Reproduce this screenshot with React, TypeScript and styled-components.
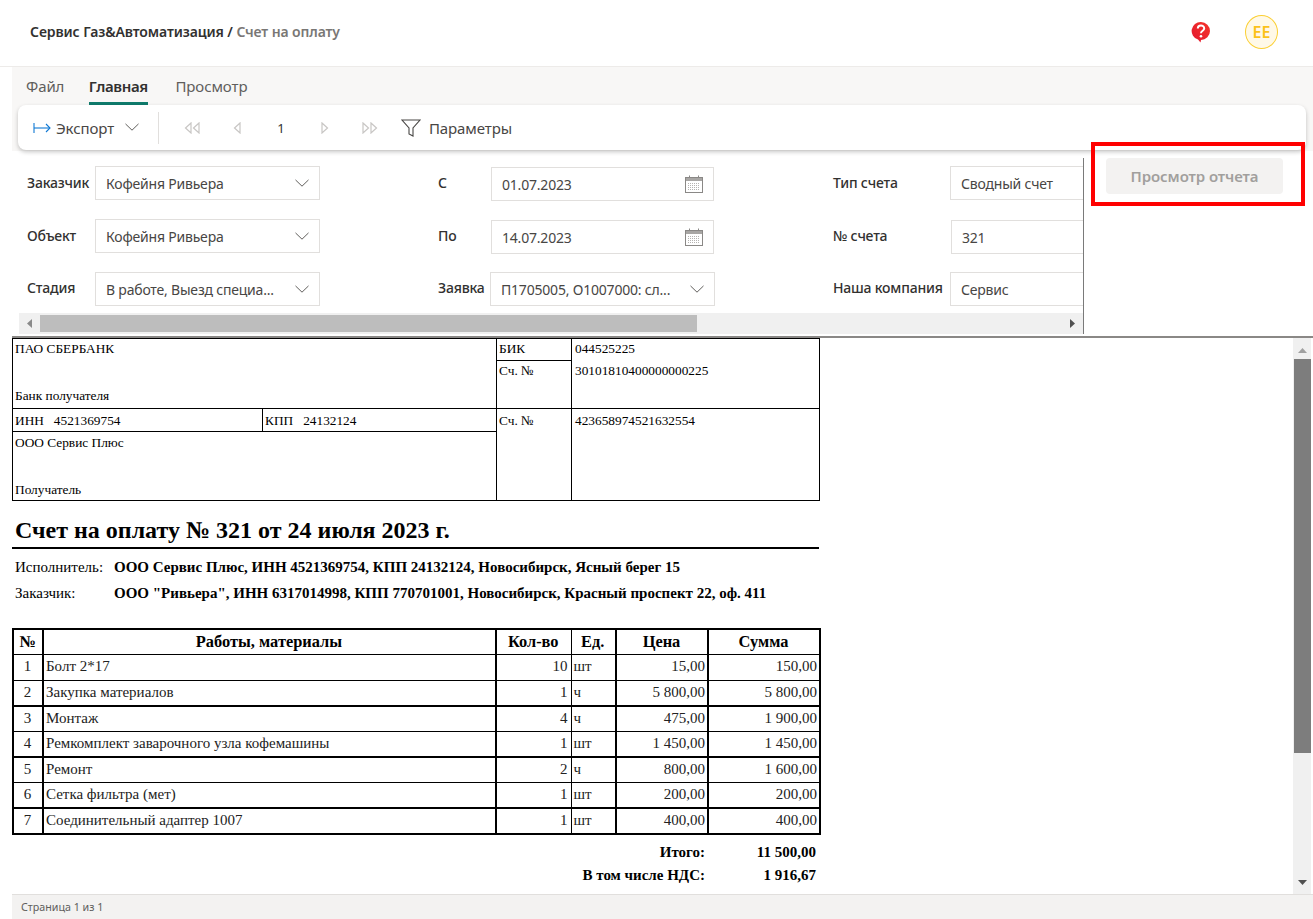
import { createGlobalStyle } from "styled-components";
import styled from "styled-components";

const UI_FONT = `"Noto Sans", "Open Sans", sans-serif`;
const DOC_FONT = `"Liberation Serif", "Times New Roman", serif`;

const GlobalStyle = createGlobalStyle`
  html, body { margin: 0; padding: 0; background: #fff; overflow: hidden; }
  * { box-sizing: border-box; }
`;

const Page = styled.div`
  width: 1313px;
  height: 919px;
  display: flex;
  flex-direction: column;
  font-family: ${UI_FONT};
  color: #323130;
  font-size: 14px;
`;

const Header = styled.header`
  height: 67px;
  flex: none;
  display: flex;
  align-items: center;
  padding: 0 35px 3px 30px;
  border-bottom: 1px solid #edebe9;
`;

const Crumbs = styled.div`
  flex: 1;
  font-size: 14px;
  font-weight: 600;
  letter-spacing: -0.1px;
`;

const CrumbLast = styled.span`
  color: #797775;
`;

const HelpIcon = styled.svg`
  width: 20px;
  height: 22px;
  margin-right: 34px;
`;

const Avatar = styled.div`
  width: 33px;
  height: 34px;
  border-radius: 50%;
  border: 1px solid #fbcf33;
  background: #fff9e8;
  color: #fbc21a;
  font-size: 16px;
  font-weight: 600;
  display: flex;
  align-items: center;
  justify-content: center;
`;

const Body = styled.div`
  flex: 1;
  min-height: 0;
  display: flex;
  flex-direction: column;
  padding-left: 12px;
`;

const Ribbon = styled.div`
  height: 84px;
  flex: none;
  background: #f8f7f6;
  padding: 0 7px 0 6px;
`;

const Tabs = styled.div`
  height: 38px;
  display: flex;
  gap: 26.5px;
  padding-left: 8px;
`;

const Tab = styled.div<{ $active?: boolean }>`
  height: 38px;
  padding-top: 9px;
  margin: ${(p) => (p.$active ? "0 1px 0 -2px" : "0")};
  font-size: 15px;
  line-height: 20px;
  letter-spacing: ${(p) => (p.$active ? "-0.35px" : "-0.1px")};
  color: ${(p) => (p.$active ? "#323130" : "#605e5c")};
  font-weight: ${(p) => (p.$active ? 600 : 400)};
  border-bottom: ${(p) => (p.$active ? "3px solid #0f7b6c" : "3px solid transparent")};
`;

const Toolbar = styled.div`
  height: 45px;
  background: #fff;
  border-radius: 8px;
  box-shadow: 0 2px 4px rgba(0, 0, 0, 0.22);
  display: flex;
  align-items: center;
  padding-left: 15px;
  position: relative;
`;

const ToolText = styled.span`
  font-size: 15px;
  color: #484644;
  letter-spacing: -0.1px;
`;

const ExportGroup = styled.div`
  width: 125px;
  display: flex;
  align-items: center;
  gap: 5px;
`;

const ExportChevron = styled.span`
  display: flex;
  margin-left: 6px;
`;

const ToolDivider = styled.div`
  width: 1px;
  height: 32px;
  background: #e1dfdd;
  margin-right: 11px;
`;

const NavItem = styled.div`
  width: 44.4px;
  height: 24px;
  display: flex;
  align-items: center;
  justify-content: center;
  font-size: 13px;
`;

const FilterGroup = styled.div`
  margin-left: 9px;
  display: flex;
  align-items: center;
  gap: 8px;
`;

const ParamArea = styled.div`
  height: 185px;
  flex: none;
  display: flex;
  position: relative;
`;

const ParamPane = styled.div`
  width: 1072px;
  margin-top: 7px;
  border-right: 1px solid #7a7a7a;
  height: 176px;
  display: flex;
  flex-direction: column;
  overflow: hidden;
`;

const ParamGrid = styled.div`
  flex: 1;
  min-height: 0;
  overflow: hidden;
  padding: 8px 0 0 15px;
  display: grid;
  grid-template-columns: 411px 395px 300px;
  grid-auto-rows: 53px;
`;

const Field = styled.div`
  display: flex;
  align-items: flex-start;
`;

const Label = styled.div<{ $w: number; $up?: boolean }>`
  width: ${(p) => p.$w}px;
  flex: none;
  font-size: 14px;
  font-weight: 500;
  line-height: 34px;
  letter-spacing: -0.2px;
  color: #323130;
  margin-top: ${(p) => (p.$up ? "-1px" : "0")};
`;

const InputBox = styled.div<{ $w: number; $low?: boolean }>`
  width: ${(p) => p.$w}px;
  height: 34px;
  flex: none;
  margin-top: ${(p) => (p.$low ? "1px" : "0")};
  border: 1px solid #e1dfdd;
  display: flex;
  align-items: center;
  justify-content: space-between;
  padding: 0 10px 0 10px;
  font-size: 14px;
  letter-spacing: -0.2px;
  color: #484644;
  white-space: nowrap;
`;

const HScroll = styled.div`
  height: 21px;
  flex: none;
  margin-left: 7px;
  padding: 0 4px;
  background: #f0f0f0;
  display: flex;
  align-items: center;
`;

const HThumb = styled.div`
  width: 657px;
  height: 17px;
  background: #bdbdbd;
  margin-left: 4px;
`;

const ScrollArrow = styled.svg`
  width: 13px;
  height: 13px;
  flex: none;
`;

const ScrollSpacer = styled.div`
  flex: 1;
`;

const RunPane = styled.div`
  padding: 7px 0 0 22px;
`;

const RunButton = styled.div`
  width: 177px;
  height: 36px;
  border-radius: 4px;
  background: #f3f2f1;
  color: #a19f9d;
  font-weight: 600;
  font-size: 15px;
  letter-spacing: -0.1px;
  display: flex;
  align-items: center;
  justify-content: center;
`;

/* annotation frame drawn over the screenshot */
const RedFrame = styled.div`
  position: absolute;
  left: 1079px;
  top: -9px;
  width: 214px;
  height: 64px;
  border: 4px solid #ff0000;
  pointer-events: none;
`;

const ReportArea = styled.div`
  flex: 1;
  min-height: 0;
  display: flex;
  border-top: 2px solid #8a8886;
`;

const ReportPage = styled.div`
  flex: 1;
  font-family: ${DOC_FONT};
  color: #000;
  overflow: hidden;
`;

const VScroll = styled.div`
  width: 18px;
  margin-right: 2px;
  flex: none;
  background: #f0f0f0;
  display: flex;
  flex-direction: column;
  align-items: center;
`;

const VThumb = styled.div`
  width: 17px;
  height: 394px;
  background: #7d7d7d;
  margin-top: 2px;
`;

const UpArrow = styled(ScrollArrow)`
  margin-top: 6px;
`;

const DownArrow = styled(ScrollArrow)`
  margin-bottom: 5px;
`;

const BankTable = styled.table`
  width: 807px;
  height: 162px;
  table-layout: fixed;
  border-collapse: collapse;
  font-size: 13.33px;
  td {
    border: 1px solid #000;
    padding: 1px 2px;
    vertical-align: top;
    line-height: 17px;
  }
`;

const BankRow = styled.tr<{ $h: number; $top?: number }>`
  height: ${(p) => p.$h}px;
  td {
    padding-top: ${(p) => p.$top ?? 1}px;
  }
`;

const AccountCell = styled.td`
  && {
    padding-left: 3px;
  }
`;

const BankStack = styled.div`
  height: 64px;
  display: flex;
  flex-direction: column;
  justify-content: space-between;
`;

const SecondAccount = styled.div`
  margin-top: 5px;
`;

const DocTitle = styled.h1`
  width: 807px;
  height: 48px;
  margin: 0;
  padding: 15px 0 0 3px;
  font-size: 24px;
  line-height: 28px;
  font-weight: 700;
  border-bottom: 2px solid #000;
`;

const PartyList = styled.div`
  padding: 9px 0 0 3px;
  display: flex;
  flex-direction: column;
  gap: 8px;
  height: 79px;
`;

const PartyRow = styled.div`
  display: flex;
  line-height: 18px;
`;

const PartyLabel = styled.div`
  width: 99px;
  flex: none;
  font-size: 15px;
`;

const PartyValue = styled.div`
  font-weight: 700;
  font-size: 15px;
  white-space: nowrap;
`;

const ItemsTable = styled.table`
  width: 807px;
  table-layout: fixed;
  border-collapse: collapse;
  font-size: 15px;
  th, td {
    border: 1px solid #000;
    padding: 0 3px 1px 2px;
    height: 25.6px;
  }
  td:nth-child(5),
  td:nth-child(6) {
    padding-right: 2px;
  }
  tr > *:nth-child(1),
  tr > *:nth-child(2),
  tr > *:nth-child(4),
  tr > *:nth-child(5),
  tr > *:nth-child(6) {
    border-right-width: 2px;
  }
  tr > *:first-child {
    border-left-width: 2px;
  }
  th {
    font-size: 16.4px;
    font-weight: 700;
    border-top-width: 2px;
  }
`;

const ItemRow = styled.tr<{ $thick?: boolean }>`
  td {
    border-bottom-width: ${(p) => (p.$thick ? "2px" : "1px")};
    color: #222;
  }
`;

const NumCell = styled.td`
  text-align: right;
`;

const CenterCell = styled.td`
  text-align: center;
`;

const Totals = styled.div`
  width: 807px;
  padding-top: 8px;
  display: flex;
  flex-direction: column;
  gap: 5px;
`;

const TotalRow = styled.div`
  display: flex;
  justify-content: flex-end;
  font-weight: 700;
  font-size: 15px;
  line-height: 18px;
  padding-right: 3px;
`;

const TotalValue = styled.div`
  width: 111px;
  text-align: right;
`;

const StatusBar = styled.div`
  height: 25px;
  flex: none;
  background: #f3f2f1;
  border-top: 1px solid #e1dfdd;
  padding-left: 9px;
  font-size: 10.7px;
  line-height: 24px;
  color: #605e5c;
`;

const ChevronDown = ({ size = 14, color = "#605e5c" }: { size?: number; color?: string }) => (
  <svg width={size} height={size * 0.6} viewBox="0 0 14 8" fill="none">
    <path d="M0.5 0.7 L7 7 L13.5 0.7" stroke={color} strokeWidth="1" />
  </svg>
);

const ExportIcon = () => (
  <svg width="18" height="12" viewBox="0 0 18 12" fill="none" stroke="#0f78d4" strokeWidth="1.1">
    <path d="M1 1 V11" />
    <path d="M1 6 H17" />
    <path d="M13 2 L17 6 L13 10" />
  </svg>
);

const NavTriangles = ({ dir, double }: { dir: "left" | "right"; double?: boolean }) => (
  <svg
    width={double ? 16 : 8}
    height="12"
    viewBox={double ? "0 0 16 12" : "0 0 8 12"}
    fill="none"
    stroke="#c8c6c4"
    strokeWidth="1.2"
  >
    {dir === "left" ? (
      <>
        <path d="M7 1 L1.5 6 L7 11 Z" />
        {double && <path d="M15 1 L9.5 6 L15 11 Z" />}
      </>
    ) : (
      <>
        <path d="M1 1 L6.5 6 L1 11 Z" />
        {double && <path d="M9 1 L14.5 6 L9 11 Z" />}
      </>
    )}
  </svg>
);

const FunnelIcon = () => (
  <svg width="20" height="18" viewBox="0 0 20 18" fill="none" stroke="#484644" strokeWidth="1.1">
    <path d="M1 1 H19 L12 9 V17 L8 15 V9 Z" />
  </svg>
);

const CalendarIcon = () => (
  <svg width="18" height="18" viewBox="0 0 18 18" fill="none">
    <rect x="0.5" y="2.5" width="17" height="15" fill="#fff" stroke="#8a8886" />
    <rect x="1" y="3" width="16" height="3" fill="#a8a6a4" />
    <path d="M4.5 0.5 V3 M13.5 0.5 V3" stroke="#8a8886" />
    <path
      d="M3 8.5 H15 M3 10.5 H15 M3 12.5 H15 M3 14.5 H15"
      stroke="#b5b3b1"
      strokeDasharray="1 1"
    />
  </svg>
);

const filters = [
  { label: "Заказчик", w: 68, box: 225, value: "Кофейня Ривьера", kind: "select" },
  { label: "С", w: 53, box: 223, value: "01.07.2023", kind: "date" },
  { label: "Тип счета", w: 117, box: 140, value: "Сводный счет", kind: "text" },
  { label: "Объект", w: 68, box: 225, value: "Кофейня Ривьера", kind: "select" },
  { label: "По", w: 53, box: 223, value: "14.07.2023", kind: "date" },
  { label: "№ счета", w: 118, box: 140, value: "321", kind: "num" },
  { label: "Стадия", w: 68, box: 225, value: "В работе, Выезд специа...", kind: "select", up: true },
  { label: "Заявка", w: 52, box: 225, value: "П1705005, О1007000: сл...", kind: "select", up: true },
  { label: "Наша компания", w: 117, box: 140, value: "Сервис", kind: "text", up: true },
];

const items = [
  { n: 1, name: "Болт 2*17", qty: "10", unit: "шт", price: "15,00", sum: "150,00", thick: false },
  { n: 2, name: "Закупка материалов", qty: "1", unit: "ч", price: "5 800,00", sum: "5 800,00", thick: true },
  { n: 3, name: "Монтаж", qty: "4", unit: "ч", price: "475,00", sum: "1 900,00", thick: false },
  { n: 4, name: "Ремкомплект заварочного узла кофемашины", qty: "1", unit: "шт", price: "1 450,00", sum: "1 450,00", thick: true },
  { n: 5, name: "Ремонт", qty: "2", unit: "ч", price: "800,00", sum: "1 600,00", thick: false },
  { n: 6, name: "Сетка фильтра (мет)", qty: "1", unit: "шт", price: "200,00", sum: "200,00", thick: true },
  { n: 7, name: "Соединительный адаптер 1007", qty: "1", unit: "шт", price: "400,00", sum: "400,00", thick: true },
];

export default function App() {
  return (
    <Page>
      <GlobalStyle />
      <Header>
        <Crumbs>
          Сервис Газ&Автоматизация / <CrumbLast>Счет на оплату</CrumbLast>
        </Crumbs>
        <HelpIcon viewBox="0 0 20 22">
          <defs>
            <linearGradient id="helpFill" x1="0" y1="1" x2="1" y2="0">
              <stop offset="0" stopColor="#e3172f" />
              <stop offset="1" stopColor="#f5352a" />
            </linearGradient>
          </defs>
          <path
            d="M10 1 A9 9 0 1 1 10 19 L9.5 21.5 L7 18.6 A9 9 0 0 1 10 1 Z"
            fill="url(#helpFill)"
          />
          <path
            d="M6.8 7.6 C6.8 3.6 13.2 3.6 13.2 7.4 C13.2 9.8 10 9.6 10 12.2"
            fill="none"
            stroke="#fff"
            strokeWidth="2"
          />
          <circle cx="10" cy="15.2" r="1.3" fill="#fff" />
        </HelpIcon>
        <Avatar>EE</Avatar>
      </Header>
      <Body>
        <Ribbon>
          <Tabs>
            <Tab>Файл</Tab>
            <Tab $active>Главная</Tab>
            <Tab>Просмотр</Tab>
          </Tabs>
          <Toolbar>
            <ExportGroup>
              <ExportIcon />
              <ToolText>Экспорт</ToolText>
              <ExportChevron>
                <ChevronDown />
              </ExportChevron>
            </ExportGroup>
            <ToolDivider />
            <NavItem>
              <NavTriangles dir="left" double />
            </NavItem>
            <NavItem>
              <NavTriangles dir="left" />
            </NavItem>
            <NavItem>1</NavItem>
            <NavItem>
              <NavTriangles dir="right" />
            </NavItem>
            <NavItem>
              <NavTriangles dir="right" double />
            </NavItem>
            <FilterGroup>
              <FunnelIcon />
              <ToolText>Параметры</ToolText>
            </FilterGroup>
          </Toolbar>
        </Ribbon>
        <ParamArea>
          <ParamPane>
            <ParamGrid>
              {filters.map((f) => (
                <Field key={f.label}>
                  <Label $w={f.w} $up={f.up}>
                    {f.label}
                  </Label>
                  <InputBox $w={f.box} $low={f.kind === "date" || f.kind === "num"}>
                    {f.value}
                    {f.kind === "select" && <ChevronDown />}
                    {f.kind === "date" && <CalendarIcon />}
                  </InputBox>
                </Field>
              ))}
            </ParamGrid>
            <HScroll>
              <ScrollArrow viewBox="0 0 13 13">
                <path d="M9 2 L4 6.5 L9 11 Z" fill="#8a8a8a" />
              </ScrollArrow>
              <HThumb />
              <ScrollSpacer />
              <ScrollArrow viewBox="0 0 13 13">
                <path d="M4 2 L9 6.5 L4 11 Z" fill="#505050" />
              </ScrollArrow>
            </HScroll>
          </ParamPane>
          <RunPane>
            <RunButton>Просмотр отчета</RunButton>
          </RunPane>
          <RedFrame />
        </ParamArea>
        <ReportArea>
          <ReportPage>
            <BankTable>
              <colgroup>
                <col width={250} />
                <col width={234} />
                <col width={75} />
                <col width={248} />
              </colgroup>
              <tbody>
                <BankRow $h={22}>
                  <td colSpan={2} rowSpan={2}>
                    <BankStack>
                      <div>ПАО СБЕРБАНК</div>
                      <div>Банк получателя</div>
                    </BankStack>
                  </td>
                  <td>БИК</td>
                  <AccountCell rowSpan={2}>
                    044525225
                    <SecondAccount>30101810400000000225</SecondAccount>
                  </AccountCell>
                </BankRow>
                <BankRow $h={48}>
                  <td>Сч. №</td>
                </BankRow>
                <BankRow $h={23} $top={3}>
                  <td>ИНН &nbsp; 4521369754</td>
                  <td>КПП &nbsp; 24132124</td>
                  <td rowSpan={2}>Сч. №</td>
                  <AccountCell rowSpan={2}>423658974521632554</AccountCell>
                </BankRow>
                <BankRow $h={69} $top={2}>
                  <td colSpan={2}>
                    <BankStack>
                      <div>ООО Сервис Плюс</div>
                      <div>Получатель</div>
                    </BankStack>
                  </td>
                </BankRow>
              </tbody>
            </BankTable>
            <DocTitle>Счет на оплату № 321 от 24 июля 2023 г.</DocTitle>
            <PartyList>
              <PartyRow>
                <PartyLabel>Исполнитель:</PartyLabel>
                <PartyValue>
                  ООО Сервис Плюс, ИНН 4521369754, КПП 24132124, Новосибирск, Ясный берег 15
                </PartyValue>
              </PartyRow>
              <PartyRow>
                <PartyLabel>Заказчик:</PartyLabel>
                <PartyValue>
                  ООО "Ривьера", ИНН 6317014998, КПП 770701001, Новосибирск, Красный проспект 22, оф. 411
                </PartyValue>
              </PartyRow>
            </PartyList>
            <ItemsTable>
              <colgroup>
                <col width={30} />
                <col width={453} />
                <col width={75} />
                <col width={45} />
                <col width={92} />
                <col width={112} />
              </colgroup>
              <thead>
                <tr>
                  <th>№</th>
                  <th>Работы, материалы</th>
                  <th>Кол-во</th>
                  <th>Ед.</th>
                  <th>Цена</th>
                  <th>Сумма</th>
                </tr>
              </thead>
              <tbody>
                {items.map((it) => (
                  <ItemRow key={it.n} $thick={it.thick}>
                    <CenterCell>{it.n}</CenterCell>
                    <td>{it.name}</td>
                    <NumCell>{it.qty}</NumCell>
                    <td>{it.unit}</td>
                    <NumCell>{it.price}</NumCell>
                    <NumCell>{it.sum}</NumCell>
                  </ItemRow>
                ))}
              </tbody>
            </ItemsTable>
            <Totals>
              <TotalRow>
                Итого:
                <TotalValue>11 500,00</TotalValue>
              </TotalRow>
              <TotalRow>
                В том числе НДС:
                <TotalValue>1 916,67</TotalValue>
              </TotalRow>
            </Totals>
          </ReportPage>
          <VScroll>
            <UpArrow viewBox="0 0 13 13">
              <path d="M2 9 L6.5 4 L11 9 Z" fill="#a0a0a0" />
            </UpArrow>
            <VThumb />
            <ScrollSpacer />
            <DownArrow viewBox="0 0 13 13">
              <path d="M2 4 L6.5 9 L11 4 Z" fill="#505050" />
            </DownArrow>
          </VScroll>
        </ReportArea>
        <StatusBar>Страница 1 из 1</StatusBar>
      </Body>
    </Page>
  );
}
